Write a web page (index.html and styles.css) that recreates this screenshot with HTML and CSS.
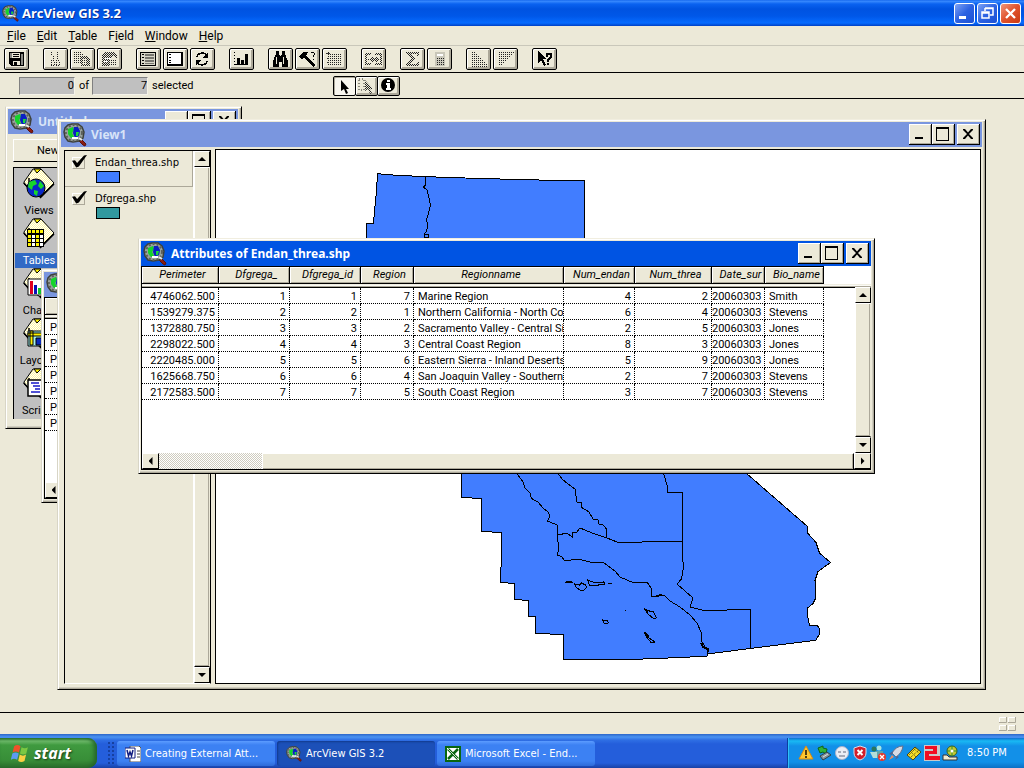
FILE: index.html
```html
<!DOCTYPE html>
<html lang="en">
<head>
<meta charset="utf-8">
<title>ArcView GIS 3.2</title>
<link rel="stylesheet" href="styles.css">
</head>
<body>
<svg class="defs" aria-hidden="true">
  <defs>
    <pattern id="dots" width="2" height="2" patternUnits="userSpaceOnUse"><path fill="#222" d="M0 0h1v1H0z"/></pattern>
    <pattern id="checker" width="2" height="2" patternUnits="userSpaceOnUse"><path fill="#222" d="M0 0h1v1H0zM1 1h1v1H1z"/></pattern>
    <pattern id="cream" width="2" height="2" patternUnits="userSpaceOnUse"><path fill="#fff" d="M0 0h2v2H0z"/><path fill="#fff7a0" d="M0 0h1v1H0zM1 1h1v1H1z"/></pattern>
    <symbol id="app" viewBox="0 0 24 24">
      <path d="M17 15l6 6-1 2-2-1-5-5z" fill="#8a1c10" stroke="#5a1008"/>
      <path d="M5 2l4-1h6l4 3 2 5-1 6-4 3-6 1-5-1-3-4-1-5 1-4z" fill="#9aa39d" stroke="#3c403a" stroke-width="1.500"/>
      <circle cx="11" cy="10" r="8" fill="none" stroke="#5c605a" stroke-width="2" stroke-dasharray="2 2"/>
      <circle cx="11" cy="10" r="6" fill="#7e968f"/>
      <path d="M5 6l5-2 1 3-2 3 2 4-3 1-3-4z" fill="#14d42c"/>
      <path d="M11 4h4l2 4-1 5-4 2-2-5z" fill="#0920c4"/>
      <path d="M13 9h3l-1 4h-2z" fill="#19d837"/>
      <path d="M9 14h6v2H9z" fill="#fff"/>
      <path d="M16 15l3 2" stroke="#e8e8e0" stroke-width="2"/>
    </symbol>
    <symbol id="sheet" viewBox="0 0 32 31">
      <path d="M1 14L10 1h8l13 14-14 14L7 21l-6-5z" fill="url(#cream)" stroke="#000"/>
      <path d="M11 1l3 4 4-4z" fill="#fff200" stroke="#000"/>
      <path d="M1 15l5 6V10M31 16L17 30" fill="none" stroke="#000" stroke-width="1.500"/>
    </symbol>
    <symbol id="min" viewBox="0 0 18 16"><path d="M4 11h8v2H4z"/></symbol>
    <symbol id="max" viewBox="0 0 18 16"><path d="M2 1h13v14H2zM3 3v11h11V3z" fill-rule="evenodd"/></symbol>
    <symbol id="close" viewBox="0 0 18 16"><path d="M4 3h2l3 3.500L12 3h2v1l-4 4 4 4v1h-2L9 9.500 6 13H4v-1l4-4-4-4z"/></symbol>
  </defs>
</svg>

<header class="titlebar">
  <svg class="titlebar-icon"><use href="#app"/></svg>
  <h1>ArcView GIS 3.2</h1>
  <div class="xp-buttons">
    <button aria-label="Minimize"><svg viewBox="0 0 19 19"><path d="M4 12h7v3H4z" fill="#fff"/></svg></button>
    <button aria-label="Restore"><svg viewBox="0 0 19 19"><path d="M7 4h8v7h-3M7 4v3M7 4.500h8" fill="none" stroke="#fff" stroke-width="1.500"/><path d="M4 8h7v6H4zM4 9h7" fill="none" stroke="#fff" stroke-width="1.500"/></svg></button>
    <button class="xp-close" aria-label="Close"><svg viewBox="0 0 19 19"><path d="M5 5l9 9M14 5l-9 9" stroke="#fff" stroke-width="2.300"/></svg></button>
  </div>
</header>

<nav class="menubar">
  <button><u>F</u>ile</button><button><u>E</u>dit</button><button><u>T</u>able</button><button>F<u>i</u>eld</button><button><u>W</u>indow</button><button><u>H</u>elp</button>
</nav>

<div class="toolbar">
  <div class="group">
    <button aria-label="Save"><svg viewBox="0 0 21 18"><path d="M3 2h15v14H5l-2-2z"/><path d="M4 3h2v5H4zM15 4h2v11h-2z" fill="#8a8a84"/><path d="M6 3h8v5H6z" fill="#ece9d8"/><path d="M7 4h6v1H7zM7 6h6v1H7z"/><path d="M7 11h7v4H7z" fill="#ece9d8"/><path d="M8 12h3v3H8z"/></svg></button>
  </div>
  <div class="group">
    <button disabled aria-label="Cut"><svg viewBox="0 0 21 18"><path d="M6 2h2v3l2 3-3 2zM14 2h-2v3l-2 3 3 2z" fill="url(#dots)"/><path d="M6 10.500h3v5H6zM11 10.500h3v5h-3z" fill="none" stroke="#222" stroke-dasharray="1 1"/></svg></button>
    <button disabled aria-label="Copy"><svg viewBox="0 0 21 18"><path d="M2 2h7l3 3v8H2z" fill="url(#dots)"/><path d="M9 6h6l3 3v7H9z" fill="url(#checker)"/><path d="M11 9h4v5h-4z" fill="#ece9d8"/><path d="M11 9h4v5h-4z" fill="url(#dots)"/></svg></button>
    <button disabled aria-label="Paste"><svg viewBox="0 0 21 18"><path d="M3 4l4-2h7l4 3v4l-4-3-4 3v7H3z" fill="url(#checker)"/><path d="M10 9h8v7h-8z" fill="url(#dots)"/><path d="M6 8h6v1H6zM5 11h4v1H5z" fill="#fff"/></svg></button>
  </div>
  <div class="group">
    <button aria-label="Select All"><svg viewBox="0 0 21 18"><path d="M2 2h16v14H2z"/><path d="M3 3h14v12H3z" fill="#d8d6c8"/><path d="M4 4h2v1H4zM4 7h2v1H4zM4 10h2v1H4zM4 13h2v1H4z"/><path d="M7 4h9v2H7zM7 7h9v2H7zM7 10h9v2H7zM7 13h9v1H7z" fill="#77766f"/></svg></button>
    <button aria-label="Select None"><svg viewBox="0 0 21 18"><path d="M2 2h16v14H2z"/><path d="M3 3h13v11H3z" fill="#fff"/><path d="M4 4h2v1H4zM4 7h2v1H4zM4 10h2v1H4zM4 12h2v1H4z"/></svg></button>
    <button aria-label="Switch Selection"><svg viewBox="0 0 21 18"><path d="M5 7c1-5 8-5 10-1M15 11c-1 5-8 5-10 1" fill="none" stroke="#000" stroke-width="1.500"/><path d="M16 2v6h-5zM4 16v-6h5z"/></svg></button>
  </div>
  <div class="group">
    <button aria-label="Create Chart"><svg viewBox="0 0 21 18"><path d="M3 2h1v1H3zM3 5h1v1H3zM3 8h1v1H3zM3 11h1v1H3zM3 14h14v1H3zM6 8h3v7H6zM10 10h3v5h-3zM14 4h3v11h-3z"/></svg></button>
  </div>
  <div class="group">
    <button aria-label="Find"><svg viewBox="0 0 21 18"><path d="M6 1h3v3l1 2h1l1-2V1h3v3l3 7v6h-6v-5h-3v5H3v-6l3-7z"/><path d="M6 7h1v7H6zM13 7h1v7h-1z" fill="#ece9d8"/></svg></button>
    <button aria-label="Query Builder"><svg viewBox="0 0 21 18"><path d="M2 6l4-4h5l-2 4 9 9-2 2-9-9-3 1z"/><path d="M14 3l2-1 2 2-2 2v1M16 9v1" fill="none" stroke="#000"/></svg></button>
    <button disabled aria-label="Promote"><svg viewBox="0 0 21 18"><path d="M3 1h2v15H3zM6 3h12v12H6z" fill="url(#dots)"/><path d="M2 3h4v1H2zM3 8h2v1H3zM3 12h2v1H3z" fill="#333"/></svg></button>
  </div>
  <div class="group">
    <button disabled aria-label="Join"><svg viewBox="0 0 21 18"><path d="M2 3h6v2H2zM2 13h6v2H2zM2 3h2v12H2zM12 3h7v2h-7zM12 13h7v2h-7zM17 3h2v12h-2z" fill="url(#checker)"/><path d="M4 9h2v1H4zM7 8l3-2v6L7 10zM10 8h3V6l4 3.500-4 3.500v-2h-3z" fill="url(#checker)"/></svg></button>
  </div>
  <div class="group">
    <button disabled aria-label="Summarize"><svg viewBox="0 0 21 18"><path d="M4 2h13v4h-2V4H8l5 5-5 5h7v-2h2v4H4v-2l5-5-5-5z" fill="url(#checker)"/></svg></button>
    <button disabled aria-label="Calculate"><svg viewBox="0 0 21 18"><path d="M6 2h10v14H6z" fill="#c9c7b9"/><path d="M8 4h6v2H8z" fill="#fff"/><path d="M7 7h8v8H7z" fill="url(#dots)"/></svg></button>
  </div>
  <div class="group">
    <button disabled aria-label="Sort Ascending"><svg viewBox="0 0 21 18"><path d="M4 2h2l13 13v2H4z" fill="url(#dots)"/></svg></button>
    <button disabled aria-label="Sort Descending"><svg viewBox="0 0 21 18"><path d="M4 2h15L6 15H4z" fill="url(#dots)"/></svg></button>
  </div>
  <div class="group">
    <button aria-label="Help"><svg viewBox="0 0 21 18"><path d="M4 1l8 8H9l3 6-2 1-3-6-3 3zM12 3h6v4l-3 3v2h-2V9l3-3V5h-2v2h-2zM13 13h2v2h-2z"/></svg></button>
  </div>
</div>

<div class="toolbar tools">
  <label class="count"><input value="0" readonly aria-label="Selected records"> of</label>
  <label class="count"><input value="7" readonly aria-label="Total records"> selected</label>
  <div class="toolset">
    <button class="pressed" aria-pressed="true" aria-label="Select"><svg viewBox="0 0 20 18"><path d="M7 3v11l3-2 2 5 2-1-2-4h3z"/></svg></button>
    <button aria-label="Select Feature"><svg viewBox="0 0 20 18"><path d="M3 2h5v11H3z" fill="none" stroke="#222" stroke-dasharray="1 2"/><path d="M9 3v11l3-2 2 5 2-1-2-4h3z" fill="url(#checker)"/></svg></button>
    <button aria-label="Identify"><svg viewBox="0 0 20 18"><circle cx="10" cy="8" r="7"/><path d="M9 3h3v2H9zM8 6h4v5h1v2H8v-2h1V8H8z" fill="#fff"/></svg></button>
  </div>
</div>

<main class="desktop">
  <section class="window project">
    <div class="caption inactive">
      <svg class="caption-icon"><use href="#app"/></svg><h2>Untitled</h2>
      <div class="caption-buttons"><button aria-label="Minimize"><svg><use href="#min"/></svg></button><button aria-label="Maximize"><svg><use href="#max"/></svg></button><button aria-label="Close"><svg><use href="#close"/></svg></button></div>
    </div>
    <div class="project-body">
      <div class="project-actions"><button>New</button><button>Open</button><button>Print</button></div>
      <div class="doc-list">
        <button class="doc"><svg viewBox="0 0 32 31"><use href="#sheet"/><circle cx="13" cy="20" r="9" fill="#0927c8" stroke="#000"/><path d="M6 14l6-2 2 4-4 2-1 4-4-3zM17 13l4 5-3 3-3-3zM11 22l4 1-1 5-3-2z" fill="#17d62b"/></svg><span>Views</span></button>
        <button class="doc selected"><svg viewBox="0 0 32 31"><use href="#sheet"/><path d="M4 11h17v18H4z" fill="#000"/><path d="M5 12h3v3H5zM9 12h3v3H9zM13 12h3v3h-3zM17 12h3v3h-3zM5 17h3v3H5zM5 21h3v3H5zM5 25h3v3H5zM13 17h3v3h-3zM13 21h3v3h-3zM13 25h3v3h-3z" fill="#fff200"/><path d="M9 17h3v3H9zM9 21h3v3H9zM9 25h3v3H9zM17 17h3v3h-3zM17 21h3v3h-3zM17 25h3v3h-3z" fill="#fff"/></svg><span>Tables</span></button>
        <button class="doc"><svg viewBox="0 0 32 31"><use href="#sheet"/><path d="M5 11h17v16H5z" fill="#fff" stroke="#000"/><path d="M7 13h3v13H7z" fill="#e00020"/><path d="M11 17h3v9h-3z" fill="#0a12b8"/><path d="M15 20h3v6h-3z" fill="#0dc92b"/></svg><span>Charts</span></button>
        <button class="doc"><svg viewBox="0 0 32 31"><use href="#sheet"/><path d="M5 13h17v15H5z" fill="#a5f2f0" stroke="#000"/><path d="M7 13h3v14H7zM5 15h17v3H5z" fill="#fff200" stroke="#000"/><path d="M13 20h8v7h-8z" fill="#0a2bbd" stroke="#000"/></svg><span>Layouts</span></button>
        <button class="doc"><svg viewBox="0 0 32 31"><use href="#sheet"/><path d="M5 12h17v16H5z" fill="#fff" stroke="#000" stroke-width="1.500"/><path d="M8 15h8M10 18h7M12 21h5M8 24h9" stroke="#1718c8" stroke-width="1.500"/></svg><span>Scripts</span></button>
      </div>
    </div>
  </section>

  <section class="window back-table">
    <div class="caption inactive"><svg class="caption-icon"><use href="#app"/></svg><h2></h2></div>
    <div class="grid">
      <div class="sheet-pane">
        <table class="records short">
          <thead><tr><th>&nbsp;</th></tr></thead>
          <tbody class="band"><tr><td></td></tr></tbody>
          <tbody><tr><td>Polygon</td></tr><tr><td>Polygon</td></tr><tr><td>Polygon</td></tr><tr><td>Polygon</td></tr><tr><td>Polygon</td></tr><tr><td>Polygon</td></tr><tr><td>Polygon</td></tr></tbody>
        </table>
      </div>
    </div>
    <div class="hscroll"><button class="arrow left" aria-label="Scroll left"></button><div class="htrack"></div></div>
  </section>

  <section class="window view">
    <div class="caption inactive">
      <svg class="caption-icon"><use href="#app"/></svg><h2>View1</h2>
      <div class="caption-buttons"><button aria-label="Minimize"><svg><use href="#min"/></svg></button><button aria-label="Maximize"><svg><use href="#max"/></svg></button><button aria-label="Close"><svg><use href="#close"/></svg></button></div>
    </div>
    <div class="view-body">
      <aside class="toc">
        <div class="themes">
          <label class="theme active"><input type="checkbox" checked><span class="theme-name">Endan_threa.shp</span><i class="swatch blue"></i></label>
          <label class="theme"><input type="checkbox" checked><span class="theme-name">Dfgrega.shp</span><i class="swatch teal"></i></label>
        </div>
        <div class="vscroll"><button class="arrow up" aria-label="Scroll up"></button><div class="vtrack"></div><button class="arrow down" aria-label="Scroll down"></button></div>
      </aside>
      <div class="map">
        <svg viewBox="216 150 764 533" preserveAspectRatio="xMinYMin meet" role="img" aria-label="Map of California regions">
          <g shape-rendering="crispEdges" fill="none" stroke="#000">
            <path fill="#417dff" d="M377.500 173.500L384 174.500 421 176.500 480 178.500 558 180.500H584.500V320L746 473l61.500 53.500V533l8.500 9.500 3.500 10.500 11 9.500L818 571.500l-3 9 1 17-3 6-5.500 4.500v7l2 10h7.500l2.500 4v5l-3.500 6-6 1-60 7.500-42.500 5.500v2L681 657.500l-50 2h-67.500v-25l-28-1v-17h-7v-16l-14-1v-16l-14-1 1-30V532.500l-20-1V498.500l-20-1V473L366.500 237V223.500h7l1-12 2-20z"/>
            <path d="M425.500 176v9l-2 2 3.500 3 2 8 1.500 7-2 8-2 7 1.500 5-1.500 6-2 3v3M424.500 234h4v3h-4z"/>
            <path d="M516.500 473L523 482l2 6 5 5 1.500 5.500L538 502l5 6 5 4 2 4-2.500 5 9.500 4 1 10-1 2 2 10-1.500 8 4.500 2 3 4 13-2 12 3h13l12 9 5 6 14 6 13-1 4 6v8l5 1 2-2 7 1 5 5 10 6 10 8 7 8 4 9 1 10 5 8 .5 5"/>
            <path d="M557.500 473L563 480l12 9 2 13h4v5l8 5 4 7 5 1 1 4 4 1 3.500 4v9M558 535l9-2 5 4v-4l5-1 3-4 12 5 15 5 10 4h25l40-.5"/>
            <path d="M663.500 473L667 485v7h15.500v65l1 10-2 12-4.500 5L693 598l-3 9 12 3h25l23.500-.5V649"/>
            <path d="M565 582h7M570 581l3 2M574.500 584l5 1 2-2 4 2 1 2-2 3-4 .5-4-3zM587.500 580l5 2 6 1 5-1v-1l1 3-6 1h-9zM608 583h4M625 610h1M602.500 620l5 1 1 2-4 .5zM644.500 609l5 2 4 1 3 6-3 .5-5-4zM644 632l4 3 1 3 6 4-4 .5-4-5z"/>
            <path stroke-width="2" d="M656 596l6-1M701 643l2 4 5 2v3M566 582h5M645 610l3 1M645 633l3 4"/>
          </g>
        </svg>
      </div>
    </div>
  </section>

  <section class="window attributes">
    <div class="caption">
      <svg class="caption-icon"><use href="#app"/></svg><h2>Attributes of Endan_threa.shp</h2>
      <div class="caption-buttons"><button aria-label="Minimize"><svg><use href="#min"/></svg></button><button aria-label="Maximize"><svg><use href="#max"/></svg></button><button aria-label="Close"><svg><use href="#close"/></svg></button></div>
    </div>
    <div class="grid">
      <div class="sheet-pane">
        <table class="records">
          <colgroup><col class="w77"><col class="w71"><col class="w71"><col class="w53"><col class="w150"><col class="w71"><col class="w77"><col class="w53"><col class="w59"></colgroup>
          <thead><tr><th>Perimeter</th><th>Dfgrega_</th><th>Dfgrega_id</th><th>Region</th><th>Regionname</th><th>Num_endan</th><th>Num_threa</th><th class="cut">Date_sur</th><th>Bio_name</th></tr></thead>
          <tbody class="band"><tr><td colspan="9"></td></tr></tbody>
          <tbody>
            <tr><td>4746062.500</td><td>1</td><td>1</td><td>7</td><td>Marine Region</td><td>4</td><td>2</td><td>20060303</td><td>Smith</td></tr>
            <tr><td>1539279.375</td><td>2</td><td>2</td><td>1</td><td>Northern California - North Coa</td><td>6</td><td>4</td><td>20060303</td><td>Stevens</td></tr>
            <tr><td>1372880.750</td><td>3</td><td>3</td><td>2</td><td>Sacramento Valley - Central Sie</td><td>2</td><td>5</td><td>20060303</td><td>Jones</td></tr>
            <tr><td>2298022.500</td><td>4</td><td>4</td><td>3</td><td>Central Coast Region</td><td>8</td><td>3</td><td>20060303</td><td>Jones</td></tr>
            <tr><td>2220485.000</td><td>5</td><td>5</td><td>6</td><td>Eastern Sierra - Inland Deserts</td><td>5</td><td>9</td><td>20060303</td><td>Jones</td></tr>
            <tr><td>1625668.750</td><td>6</td><td>6</td><td>4</td><td>San Joaquin Valley - Southern</td><td>2</td><td>7</td><td>20060303</td><td>Stevens</td></tr>
            <tr><td>2172583.500</td><td>7</td><td>7</td><td>5</td><td>South Coast Region</td><td>3</td><td>7</td><td>20060303</td><td>Stevens</td></tr>
          </tbody>
        </table>
      </div>
      <div class="vscroll"><button class="arrow up" aria-label="Scroll up"></button><div class="vtrack"></div><button class="arrow down" aria-label="Scroll down"></button></div>
    </div>
    <div class="hscroll"><button class="arrow left" aria-label="Scroll left"></button><div class="htrack"><div class="thumb"></div></div><button class="arrow right" aria-label="Scroll right"></button></div>
  </section>
</main>

<div class="statusbar"><svg viewBox="0 0 17 14"><path d="M0 0h7v6H0zM9 0h7v6H9zM0 8h7v6H0zM9 8h7v6H9z" fill="#ece9d8"/><path d="M.5 6V.5H7M9.500 6V.5H16M.5 13V8.500H7M9.500 13V8.500H16" fill="none" stroke="#fff"/><path d="M7.500 0v5.500H0M16.500 0v5.500H9M7.500 8v5.500H0M16.500 8v5.500H9" fill="none" stroke="#aca899"/></svg></div>

<footer class="taskbar">
  <button class="start"><svg viewBox="0 0 18 17"><path d="M3 2q3-2 6 0L7.500 8q-3-2-6 0z" fill="#f0512a"/><path d="M10 3q3 2 6 0l-1.500 6q-3 2-6 0z" fill="#7cc843"/><path d="M1.300 9q3-2 6 0l-1.500 6q-3-2-6 0z" fill="#5c9bf2"/><path d="M8.300 10q3 2 6 0l-1.500 6q-3 2-6 0z" fill="#fbd043"/></svg>start</button>
  <div class="tasks">
    <span class="grip"></span>
    <button class="task"><svg viewBox="0 0 16 16"><path d="M5 0h9l2 2v14H5z" fill="#fff" stroke="#555"/><path d="M12 5h3M12 8h3M12 11h3" stroke="#444"/><path d="M0 2h10v10H0z" fill="#fff" stroke="#101c80"/><path d="M2 4l1.500 6L5 6l1.500 4L8 4" fill="none" stroke="#101c80" stroke-width="1.500"/></svg>Creating External Att...</button>
    <button class="task current"><svg><use href="#app"/></svg>ArcView GIS 3.2</button>
    <button class="task"><svg viewBox="0 0 16 16"><path d="M0 0h16v16H0z" fill="#08660f"/><path d="M2 2h12v12H2z" fill="#fff"/><path d="M3 3l10 10M13 3L3 13" stroke="#08660f" stroke-width="2.500"/><path d="M3 3l10 10" stroke="#fff" stroke-width=".8"/></svg>Microsoft Excel - End...</button>
  </div>
  <div class="tray">
    <svg viewBox="0 0 16 16"><path d="M8 1l7 13H1z" fill="#ffc62e" stroke="#d68a12"/><path d="M7 5h2v5H7zM7 11h2v2H7z" fill="#513b10"/></svg>
    <svg viewBox="0 0 16 16"><path d="M2 3l5-2v2l4 1-1 5-3-2-3 1z" fill="#2fb437" stroke="#126418"/><path d="M4 11l7-4 4 3-8 5z" fill="#8794a0" stroke="#2f4145"/><path d="M7 12l5-3" stroke="#e0e0d0"/></svg>
    <svg viewBox="0 0 16 16"><circle cx="8" cy="8" r="6.500" fill="#eceef5" stroke="#a8b1c9"/><path d="M4 7h3M9 7h3M5 11h6" stroke="#62697d"/></svg>
    <svg viewBox="0 0 16 16"><path d="M8 1l6 2v5q0 5-6 7-6-2-6-7V3z" fill="#d21e2a" stroke="#dadde8"/><path d="M5.500 5l5 5M10.500 5l-5 5" stroke="#fff" stroke-width="2"/></svg>
    <svg viewBox="0 0 16 16"><circle cx="9" cy="3" r="2.500" fill="#a9e5e1"/><path d="M5 6h8v7H6z" fill="#5da6ad"/><circle cx="4" cy="4" r="2.500" fill="#28765d"/><path d="M0 7h7v6H3z" fill="#b4ddd7"/><circle cx="12" cy="12" r="4" fill="#e6382b"/><path d="M10 10l4 4M14 10l-4 4" stroke="#fff" stroke-width="1.300"/></svg>
    <svg viewBox="0 0 16 16"><path d="M15 1Q8 1 4 8l4 4q6-4 7-11z" fill="#d7dbe4" stroke="#67708a"/><path d="M5 6L1 9l3 1zM9 11l-2 4 4-3z" fill="#52638d"/><path d="M4 10l-3 5 5-3z" fill="#f08a5c"/></svg>
    <svg viewBox="0 0 16 16"><path d="M1 10l8-8 6 5-8 8z" fill="#f6df28" stroke="#4d4510"/><path d="M3 10l7-7M5 12l8-7M5 7l5 5M8 4l5 4" stroke="#4d4510" stroke-dasharray="1 1"/></svg>
    <svg viewBox="0 0 16 16"><path d="M0 0h16v16H0z" fill="#c9c9c9"/><path d="M1 1h12v8H5v2h11v4H1V6h8V4H1z" fill="#f20d22"/></svg>
    <svg viewBox="0 0 16 16"><circle cx="10" cy="6" r="5" fill="#c3c832" stroke="#355d25"/><path d="M10 1v10M5 6h10" stroke="#2e8c35"/><circle cx="10" cy="6" r="1.500" fill="#fff"/><path d="M1 10h4l2 2h8v3H1z" fill="#f0ead0" stroke="#333"/></svg>
    <time>8:50 PM</time>
  </div>
</footer>
</body>
</html>
```
FILE: styles.css
```css
* { box-sizing: border-box; }
body {
  margin: 0;
  height: 100vh;
  display: flex;
  flex-direction: column;
  overflow: hidden;
  background: #ece9d8;
  color: #000;
  font: 11px/16px Roboto, "Liberation Sans", sans-serif;
}
button, input { font: inherit; color: inherit; margin: 0; padding: 0; border: 0; border-radius: 0; }
button { background: none; }
svg { display: block; flex: none; }
h1, h2 { margin: 0; }
.defs { position: absolute; width: 0; height: 0; }

/* Application title bar */
.titlebar {
  flex: none;
  display: flex;
  align-items: center;
  height: 26px;
  padding: 0 3px 0 2px;
  background: linear-gradient(#0a5ce8 0, #3b8cff 1px, #0a62f0 4px, #0053e1 9px, #0057e8 16px, #066bff 23px, #0040c4 26px);
}
.titlebar-icon { width: 17px; height: 17px; }
.titlebar h1 {
  flex: 1;
  padding-left: 3px;
  font: bold 13px/20px "Open Sans", "Noto Sans", sans-serif;
  color: #fff;
  text-shadow: 1px 1px #0a2d90;
}
.xp-buttons { display: flex; gap: 2px; }
.xp-buttons button {
  width: 21px;
  height: 21px;
  border: 1px solid #fff;
  border-radius: 3px;
  background: linear-gradient(135deg, #7da2f5, #2c62e2 50%, #1b50d4);
}
.xp-buttons .xp-close { background: linear-gradient(135deg, #f0967b, #e0522c 50%, #c93a12); }

/* Menu and toolbars */
.menubar { flex: none; display: flex; gap: 11px; height: 20px; padding-left: 7px; border-bottom: 1px solid #c9c7ba; font-size: 12px; }
.menubar button { height: 19px; }
.toolbar {
  flex: none;
  display: flex;
  align-items: center;
  gap: 14px;
  height: 27px;
  padding-left: 4px;
  border-bottom: 1px solid #000;
}
.group { display: flex; gap: 2px; }
.group button, .toolset button {
  width: 25px;
  height: 22px;
  padding: 1px;
  border: 1px solid #000;
  border-radius: 2px;
  background: #ece9d8;
  box-shadow: inset 1px 1px #fff, inset -2px -2px #aca899;
}
.group svg { width: 21px; height: 18px; shape-rendering: crispEdges; }
.tools { height: 26px; padding-left: 19px; gap: 3px; }
.count { display: flex; gap: 4px; white-space: nowrap; line-height: 18px; }
.count input {
  width: 56px;
  height: 18px;
  background: #c0c0c0;
  text-align: right;
  border: 1px solid;
  border-color: #808080 #f4f2e8 #f4f2e8 #808080;
}
.toolset { display: flex; padding-left: 136px; }
.toolset button { width: 23px; height: 20px; margin-right: -1px; padding: 0; }
.toolset svg { width: 20px; height: 18px; }
.toolset .pressed { background: #f8f6ee; box-shadow: inset 1px 1px #aca899; }

/* Document windows on the workspace */
.desktop { flex: 1; min-height: 0; position: relative; overflow: hidden; }
.window {
  position: absolute;
  display: flex;
  flex-direction: column;
  padding: 2px 3px 3px 2px;
  border: 1px solid #000;
  border-top-color: #f1eee0;
  border-left-color: #d8d5c6;
  background: #ece9d8;
  box-shadow: inset 1px 1px #fff, inset -1px -1px #aca899, inset -2px -2px #d0cdbf;
}
.project { left: 5px; top: 7px; width: 237px; height: 323px; }
.back-table { left: 41px; top: 170px; width: 300px; height: 234px; }
.view { left: 57px; top: 20px; width: 929px; height: 571px; padding-left: 3px; }
.attributes { left: 138px; top: 139px; width: 737px; height: 236px; }

.caption {
  flex: none;
  display: flex;
  align-items: center;
  height: 25px;
  padding: 0 2px;
  background: #0054e3;
  color: #fff;
}
.caption.inactive { background: #7a96df; color: #d8e4f8; }
.caption-icon { width: 24px; height: 24px; }
.caption h2 { flex: 1; padding-left: 4px; font: bold 12px/24px "Noto Sans", "Open Sans", sans-serif; }
.caption-buttons { display: flex; }
.caption-buttons button {
  display: grid;
  place-items: center;
  width: 23px;
  height: 21px;
  border: 1px solid #000;
  border-width: 0 1px 1px 0;
  background: #ece9d8;
  box-shadow: inset 1px 1px #fff, inset -1px -1px #aca899;
}
.caption-buttons button:last-child { margin-left: 2px; }
.caption-buttons svg { width: 18px; height: 16px; }

/* Project window */
.project-body { flex: 1; display: flex; flex-direction: column; padding: 5px 4px 6px 5px; gap: 5px; }
.project-actions { display: flex; }
.project-actions button {
  width: 70px;
  height: 23px;
  border: 1px solid;
  border-color: #fff #000 #000 #fff;
  line-height: 20px;
}
.doc-list { flex: 1; width: 60px; padding-left: 1px; border-left: 1px solid #000; border-top: 1px solid #000; background: #c0c0c0; }
.doc { display: flex; flex-direction: column; align-items: center; width: 48px; height: 50px; }
.doc svg { width: 32px; height: 31px; margin: 0 0 4px; }
.doc span { align-self: stretch; line-height: 15px; }
.doc.selected span { background: #316ac5; color: #fff; }

/* Tables */
.grid {
  flex: 1;
  min-height: 0;
  display: flex;
  border-left: 1px solid #000;
  background: linear-gradient(#fff 18px, #ece9d8 18px, #fff 20px, #aca899 20px, #aca899 21px, #000 21px, #000 22px, #fff 22px);
}
.sheet-pane { flex: 1; min-width: 0; overflow: hidden; }
.records { width: 682px; table-layout: fixed; border-collapse: separate; border-spacing: 0; }
.w53 { width: 53px; } .w59 { width: 59px; } .w71 { width: 71px; } .w77 { width: 77px; } .w150 { width: 150px; }
.records th {
  height: 18px;
  padding: 0 2px 0 7px;
  overflow: hidden;
  white-space: nowrap;
  border: 1px solid #000;
  border-left: 0;
  background: #ece9d8;
  box-shadow: inset 1px 1px #fff, inset -1px -1px #aca899;
  font-weight: normal;
  font-style: italic;
  line-height: 16px;
}
.records th.cut, .records th:last-child { padding-left: 5px; padding-right: 0; }
.records .band td { height: 4px; padding: 0; border: 0; line-height: 0; }
.records td {
  height: 16px;
  padding: 2px 3px 0 0;
  overflow: hidden;
  white-space: nowrap;
  text-align: right;
  border-right: 1px dotted #000;
  border-bottom: 1px dotted #000;
  line-height: 13px;
}
.records td:nth-child(5), .records td:nth-child(9) { padding-left: 4px; padding-right: 0; text-align: left; }
.records.short { width: 280px; }
.records.short td { padding-left: 5px; text-align: left; }

/* Scroll bars */
.vscroll { display: flex; flex-direction: column; width: 16px; }
.grid .vscroll { padding-top: 21px; }
.vtrack { flex: 1; border: 1px solid; border-color: #fff #ece9d8 #000 #fff; background: #ece9d8; box-shadow: inset -1px -1px #aca899; }
.arrow {
  flex: none;
  display: grid;
  place-items: center;
  width: 16px;
  height: 16px;
  border: 1px solid;
  border-color: #fff #000 #000 #fff;
  background: #ece9d8;
}
.arrow::before { content: ""; width: 8px; height: 4px; background: #000; clip-path: polygon(50% 0, 100% 100%, 0 100%); }
.arrow.down::before { clip-path: polygon(0 0, 100% 0, 50% 100%); }
.arrow.left::before, .arrow.right::before { width: 4px; height: 8px; clip-path: polygon(100% 0, 100% 100%, 0 50%); }
.arrow.right::before { clip-path: polygon(0 0, 100% 50%, 0 100%); }
.hscroll { flex: none; display: flex; height: 17px; border: 1px solid #000; border-width: 0 0 1px 1px; }
.hscroll .arrow { width: 17px; }
.htrack { flex: 1; padding-left: 103px; background: repeating-conic-gradient(#fff 0 25%, #cfccbf 0 50%) 0 0 / 2px 2px; }
.thumb { height: 16px; border-left: 1px solid #fff; border-top: 1px solid #fff; border-right: 1px solid #000; background: #ece9d8; box-shadow: inset -1px -1px #aca899; }

/* View window */
.view-body { flex: 1; min-height: 0; display: flex; gap: 4px; padding: 2px 1px 2px 3px; }
.toc { flex: none; display: flex; width: 147px; margin-top: 1px; border: 1px solid #000; border-bottom-color: #fff; }
.themes { flex: 1; border-right: 1px solid #fff; }
.theme { display: grid; grid-template-columns: 29px 1fr; grid-template-rows: 16px 12px; height: 36px; padding: 4px 0 0 1px; }
.theme.active { border: solid; border-width: 0 1px 1px 0; border-color: #aca899; }
.theme input { appearance: none; width: 13px; height: 12px; margin: 2px 0 0 6px; border: 1px solid; border-color: #fff #aca899 #aca899 #fff; }
.theme input:checked::before { content: ""; display: block; width: 15px; height: 13px; margin: -3px 0 0 -1px; background: #000; clip-path: polygon(0 45%, 20% 40%, 34% 62%, 80% 4%, 100% 0, 46% 88%, 28% 96%); }
.theme-name { font: 10px/16px "DejaVu Sans", sans-serif; }
.swatch { grid-column: 2; width: 24px; height: 12px; margin-left: 1px; border: 1px solid #000; }
.blue { background: #417dff; }
.teal { background: #31999f; }
.map { flex: 1; min-width: 0; border: 1px solid #000; background: #fff; overflow: hidden; }
.map svg { width: 100%; height: 100%; }

/* Status bar and taskbar */
.statusbar { flex: none; display: flex; align-items: center; justify-content: flex-end; height: 22px; padding-right: 8px; border-top: 1px solid #000; }
.statusbar svg { width: 17px; height: 14px; }
.taskbar {
  flex: none;
  display: flex;
  align-items: stretch;
  height: 34px;
  color: #fff;
  font: 11px/16px "DejaVu Sans Condensed", "DejaVu Sans", sans-serif;
  background: linear-gradient(#2c66c8 0, #4a93f2 3px, #2f6fe4 6px, #245edb 10px, #245edb 29px, #1941a5 34px);
}
.start {
  display: flex;
  align-items: center;
  gap: 4px;
  width: 97px;
  margin-top: 4px;
  padding-left: 11px;
  border-radius: 0 9px 9px 0;
  background: linear-gradient(#2c7a2c 0, #6fbb6b 3px, #3f9a3f 7px, #388e38 22px, #2b6e2b 30px);
  box-shadow: inset -3px 0 4px #24652a;
  font: italic bold 16px/24px "Open Sans", "Noto Sans", sans-serif;
  text-shadow: 1px 1px 2px #173a17;
}
.start svg { width: 19px; height: 18px; }
.tasks { flex: 1; min-width: 0; display: flex; gap: 2px; padding: 7px 0 2px 10px; }
.grip { width: 8px; background: radial-gradient(circle, #1640a0 1px, transparent 1px) 0 0 / 4px 4px; }
.task {
  display: flex;
  align-items: center;
  gap: 4px;
  width: 158px;
  padding-left: 8px;
  border-radius: 3px;
  background: linear-gradient(#5c9cff, #3c81f3 4px, #3c81f3 20px, #2e6bd8);
  white-space: nowrap;
}
.task.current { padding-left: 9px; background: #1c50b8; box-shadow: inset 1px 1px 2px #123a8c; }
.task svg { width: 16px; height: 16px; }
.tray {
  display: flex;
  align-items: center;
  gap: 2px;
  width: 237px;
  margin-top: 4px;
  padding-left: 10px;
  border-left: 1px solid #0b3fa0;
  background: linear-gradient(#0f6fd0 0, #19b9f3 3px, #1290e8 8px, #1290e8 24px, #0d6fc4 30px);
  box-shadow: inset 1px 0 #2fc0f8;
}
.tray svg { width: 16px; height: 16px; }
.tray time { padding-left: 7px; white-space: nowrap; }
```
